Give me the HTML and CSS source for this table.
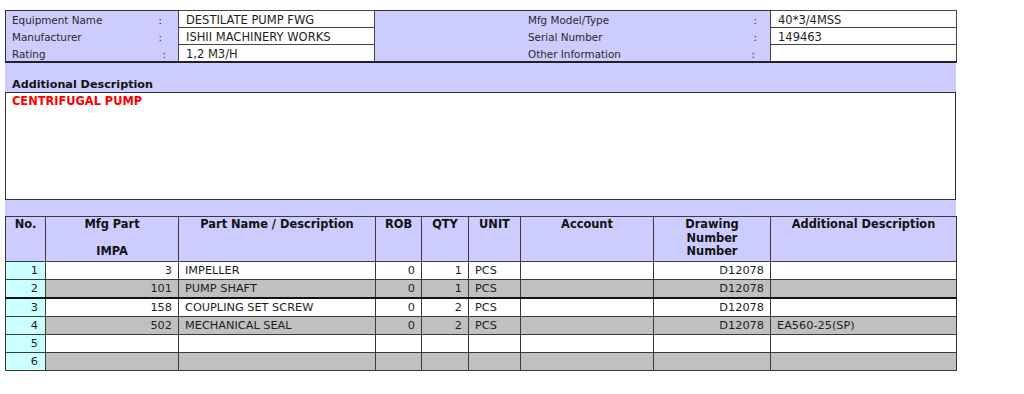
FILE: index.html
```html
<!DOCTYPE html>
<html>
<head>
<meta charset="utf-8">
<title>Equipment</title>
<link rel="stylesheet" href="styles.css">
</head>
<body>
<div class="page">
  <table class="info">
    <colgroup>
      <col class="c-lbl"><col class="c-colon"><col class="c-val"><col class="c-rlbl"><col class="c-rcolon"><col class="c-rval">
    </colgroup>
    <tr>
      <td class="lbl">Equipment Name</td><td class="colon">:</td><td class="val">DESTILATE PUMP FWG</td>
      <td class="lbl rlbl">Mfg Model/Type</td><td class="colon rcolon">:</td><td class="val">40*3/4MSS</td>
    </tr>
    <tr>
      <td class="lbl">Manufacturer</td><td class="colon">:</td><td class="val">ISHII MACHINERY WORKS</td>
      <td class="lbl rlbl">Serial Number</td><td class="colon rcolon">:</td><td class="val">149463</td>
    </tr>
    <tr>
      <td class="lbl">Rating</td><td class="colon shift">:</td><td class="val">1,2 M3/H</td>
      <td class="lbl rlbl">Other Information</td><td class="colon rcolon shift">:</td><td class="val"></td>
    </tr>
  </table>

  <div class="desc-head">Additional Description</div>
  <div class="desc-box">CENTRIFUGAL PUMP</div>
  <div class="band"></div>

  <table class="parts">
    <colgroup>
      <col class="p-no"><col class="p-mfg"><col class="p-name"><col class="p-rob"><col class="p-qty"><col class="p-unit"><col class="p-acc"><col class="p-drw"><col class="p-add">
    </colgroup>
    <thead>
      <tr>
        <th>No.</th>
        <th>Mfg Part<br><br>IMPA</th>
        <th>Part Name / Description</th>
        <th>ROB</th>
        <th>QTY</th>
        <th>UNIT</th>
        <th>Account</th>
        <th>Drawing<br>Number<br>Number</th>
        <th>Additional Description</th>
      </tr>
    </thead>
    <tbody>
      <tr>
        <td class="no">1</td><td class="num">3</td><td>IMPELLER</td><td class="num">0</td><td class="num">1</td><td>PCS</td><td></td><td class="num">D12078</td><td></td>
      </tr>
      <tr class="alt">
        <td class="no">2</td><td class="num">101</td><td>PUMP SHAFT</td><td class="num">0</td><td class="num">1</td><td>PCS</td><td></td><td class="num">D12078</td><td></td>
      </tr>
      <tr class="brk">
        <td class="no">3</td><td class="num">158</td><td>COUPLING SET SCREW</td><td class="num">0</td><td class="num">2</td><td>PCS</td><td></td><td class="num">D12078</td><td></td>
      </tr>
      <tr class="alt">
        <td class="no">4</td><td class="num">502</td><td>MECHANICAL SEAL</td><td class="num">0</td><td class="num">2</td><td>PCS</td><td></td><td class="num">D12078</td><td>EA560-25(SP)</td>
      </tr>
      <tr>
        <td class="no">5</td><td></td><td></td><td></td><td></td><td></td><td></td><td></td><td></td>
      </tr>
      <tr class="alt">
        <td class="no">6</td><td></td><td></td><td></td><td></td><td></td><td></td><td></td><td></td>
      </tr>
    </tbody>
  </table>
</div>
</body>
</html>
```

FILE: styles.css
```css
html, body {
  margin: 0;
  padding: 0;
  background: #ffffff;
}

body {
  font-family: "DejaVu Sans", Verdana, sans-serif;
  font-size: 11px;
  color: #1e1e1e;
}

.page {
  width: 951px;
  padding: 10px 0 0 5px;
}

/* ---------- header info table ---------- */
.info {
  width: 951px;
  border-collapse: collapse;
  table-layout: fixed;
  background: #ccccff;
  border-top: 1px solid #333333;
  border-left: 1px solid #333333;
  border-right: 1px solid #333333;
  border-bottom: 2px solid #222222;
}

.c-lbl { width: 145px; }
.c-colon { width: 28px; }
.c-val { width: 196px; }
.c-rlbl { width: 366px; }
.c-rcolon { width: 30px; }
.c-rval { width: 186px; }

.info td {
  padding: 2px 0 0;
  height: 14px;
  line-height: 14px;
  white-space: nowrap;
  overflow: hidden;
}

.info .lbl {
  padding-left: 6px;
  font-size: 10.4px;
  color: #2a2a2a;
}

.info .rlbl {
  padding-left: 153px;
}

.info .colon {
  padding-left: 8px;
  font-size: 10.4px;
  color: #2a2a2a;
}

.info .rcolon {
  padding-left: 13px;
}

.info .colon.shift {
  padding-left: 12px;
}

.info .rcolon.shift {
  padding-left: 11px;
}

.info .val {
  background: #ffffff;
  border: 1px solid #444444;
  padding-left: 7px;
  font-size: 11.5px;
}

/* ---------- additional description ---------- */
.desc-head {
  background: #ccccff;
  padding: 15px 0 0 7px;
  height: 14px;
  line-height: 14px;
  font-weight: bold;
  font-size: 11.2px;
  color: #111111;
}

.desc-box {
  height: 106px;
  border: 1px solid #333333;
  padding: 1px 0 0 6px;
  box-sizing: content-box;
  line-height: 14px;
  font-weight: bold;
  font-size: 11.4px;
  color: #ff0000;
  max-height: 105px;
}

.band {
  height: 16px;
  background: #ccccff;
}

/* ---------- parts table ---------- */
.parts {
  width: 951px;
  border-collapse: collapse;
  table-layout: fixed;
}

.p-no { width: 40px; }
.p-mfg { width: 133px; }
.p-name { width: 197px; }
.p-rob { width: 46px; }
.p-qty { width: 47px; }
.p-unit { width: 52px; }
.p-acc { width: 133px; }
.p-drw { width: 117px; }
.p-add { width: 186px; }

.parts th,
.parts td {
  border: 1px solid #3a3a3a;
}

.parts th {
  background: #ccccff;
  font-weight: bold;
  font-size: 11.4px;
  color: #111111;
  line-height: 13.5px;
  padding: 1px 3px 2px;
  vertical-align: top;
  text-align: center;
  height: 40px;
}

.parts td {
  background: #ffffff;
  padding: 0 6px;
  height: 17px;
  line-height: 17px;
  font-size: 11.3px;
  white-space: nowrap;
  overflow: hidden;
}

.parts tr.alt td {
  background: #c0c0c0;
}

.parts tr.brk td {
  border-top: 2px solid #111111;
}

.parts td.num {
  text-align: right;
}

.parts td.no,
.parts tr.alt td.no {
  background: #ccffff;
  text-align: right;
  padding-right: 7px;
}
```
